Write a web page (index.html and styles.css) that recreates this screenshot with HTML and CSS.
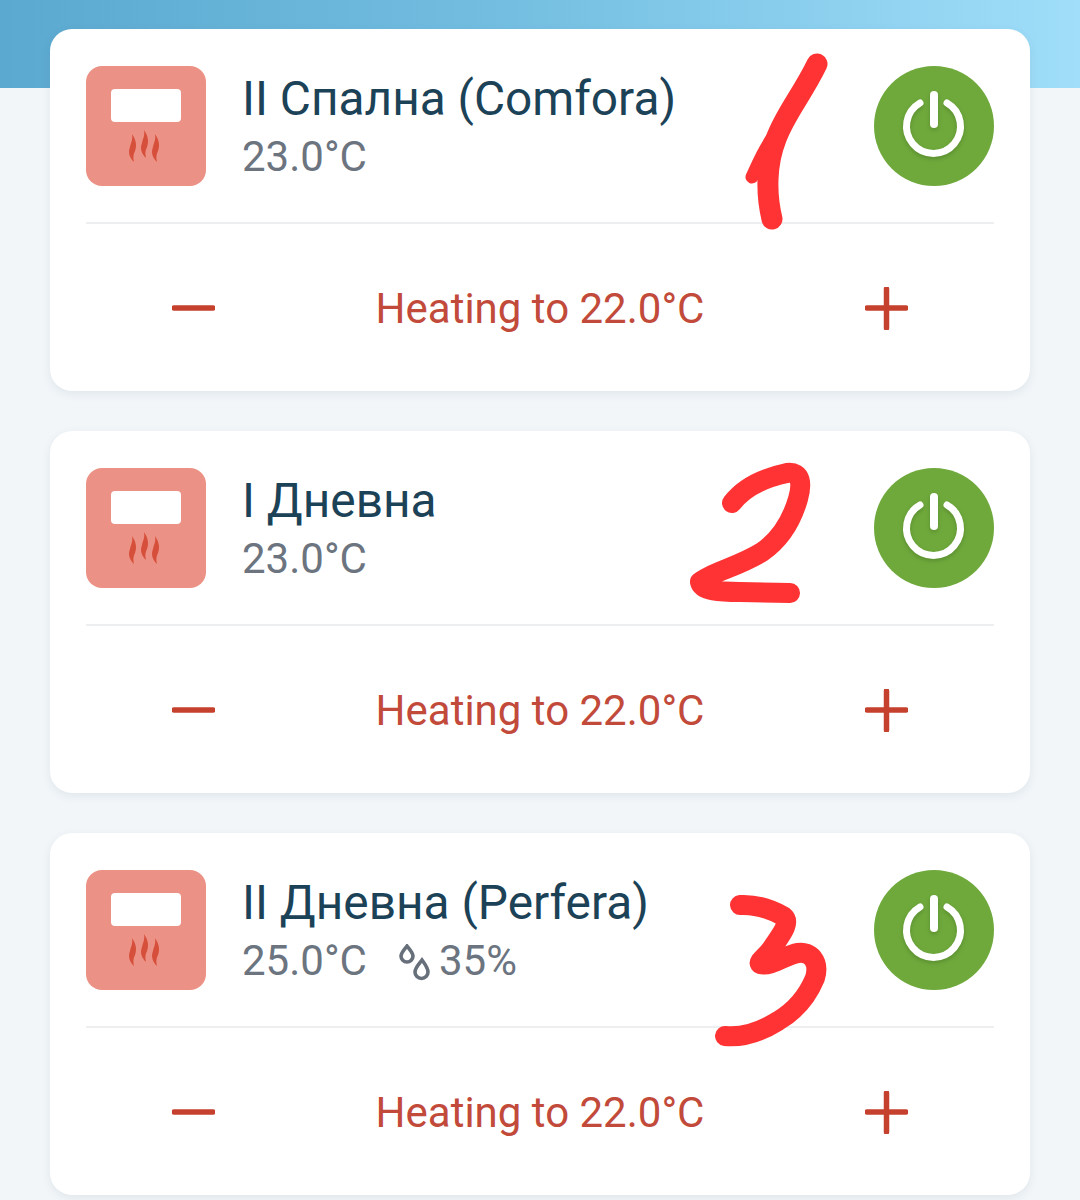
FILE: index.html
```html
<!DOCTYPE html>
<html lang="bg">
<head>
<meta charset="utf-8">
<title>Климатици</title>
<link rel="stylesheet" href="styles.css">
</head>
<body>
<main class="page">
  <svg width="0" height="0" class="defs" aria-hidden="true">
    <defs>
      <path id="flame" d="M58 64C62 70 63 75 61 81 59 85 59 88 60 92 55 87 54 82 56 77 57 72 59 70 58 64Z"/>
      <g id="unit">
        <rect x="25" y="23" width="70" height="33" rx="4" fill="#fff"/>
        <g fill="#d64f3a">
          <use href="#flame" transform="translate(-12 4)"/>
          <use href="#flame"/>
          <use href="#flame" transform="translate(11 4)"/>
        </g>
      </g>
      <g id="power" fill="none" stroke="#fff" stroke-linecap="round">
        <path d="M46 37a27 27 0 1 0 27 0" stroke-width="7"/>
        <path d="M60 29v29" stroke-width="8"/>
      </g>
    </defs>
  </svg>

  <article class="card">
    <div class="top">
      <svg class="unit" viewBox="0 0 120 120"><use href="#unit"/></svg>
      <div class="info">
        <h2 class="name">II Спална (Comfora)</h2>
        <p class="reading"><span>23.0°C</span></p>
      </div>
      <button class="power"><svg viewBox="0 0 120 120"><use href="#power"/></svg></button>
    </div>
    <div class="controls">
      <svg class="step" viewBox="0 0 43 43"><path d="M2 21h39"/></svg>
      <span class="status">Heating to 22.0°C</span>
      <svg class="step" viewBox="0 0 43 43"><path d="M2 21h39M21.500 2v39"/></svg>
    </div>
    <svg class="scribble" viewBox="0 0 980 362" aria-hidden="true">
      <path d="M767 35C755 62 742 80 723 108 712 124 708 135 702 148" stroke-width="13"/>
      <path d="M767 35C752 66 735 85 726 110 716 135 716 165 722 190" stroke-width="21"/>
    </svg>
  </article>

  <article class="card">
    <div class="top">
      <svg class="unit" viewBox="0 0 120 120"><use href="#unit"/></svg>
      <div class="info">
        <h2 class="name">I Дневна</h2>
        <p class="reading"><span>23.0°C</span></p>
      </div>
      <button class="power"><svg viewBox="0 0 120 120"><use href="#power"/></svg></button>
    </div>
    <div class="controls">
      <svg class="step" viewBox="0 0 43 43"><path d="M2 21h39"/></svg>
      <span class="status">Heating to 22.0°C</span>
      <svg class="step" viewBox="0 0 43 43"><path d="M2 21h39M21.500 2v39"/></svg>
    </div>
    <svg class="scribble" viewBox="0 0 980 362" aria-hidden="true">
      <path d="M682 72C695 55 718 46 737 42 752 40 752 54 748 68 741 92 728 110 712 121 688 136 662 141 650 151 652 160 670 161 690 161L740 162" stroke-width="20"/>
    </svg>
  </article>

  <article class="card">
    <div class="top">
      <svg class="unit" viewBox="0 0 120 120"><use href="#unit"/></svg>
      <div class="info">
        <h2 class="name">II Дневна (Perfera)</h2>
        <p class="reading">
          <span>25.0°C</span>
          <span class="humidity">
            <svg class="drops" viewBox="0 0 32 38"><path d="M8 2c3 4 6 7 6 10a6 6 0 0 1-12 0c0-3 3-6 6-10z"/><path d="M23 16c3 4 6 8 6 12a6.500 6.500 0 0 1-13 0c0-4 4-8 7-12z"/></svg>
            35%
          </span>
        </p>
      </div>
      <button class="power"><svg viewBox="0 0 120 120"><use href="#power"/></svg></button>
    </div>
    <div class="controls">
      <svg class="step" viewBox="0 0 43 43"><path d="M2 21h39"/></svg>
      <span class="status">Heating to 22.0°C</span>
      <svg class="step" viewBox="0 0 43 43"><path d="M2 21h39M21.500 2v39"/></svg>
    </div>
    <svg class="scribble" viewBox="0 0 980 362" aria-hidden="true">
      <path d="M690 72C706 71 720 76 733 83 742 90 729 104 722 115 716 124 708 128 710 131 722 134 735 122 748 120 760 118 770 128 765 145 758 162 745 178 728 188 712 198 694 205 675 203" stroke-width="20"/>
    </svg>
  </article>
</main>
</body>
</html>
```
FILE: styles.css
```css
* { box-sizing: border-box; }
html, body { margin: 0; padding: 0; }
body { font-family: Roboto, "Noto Sans", sans-serif; overflow: hidden; }

.page {
  height: 1200px;
  padding: 29px 50px 0;
  display: flex;
  flex-direction: column;
  gap: 40px;
  background-color: #f2f6f9;
  background-image: linear-gradient(90deg, #5ba9d0 0%, #72bde0 45%, #a0def9 100%);
  background-size: 100% 88px;
  background-repeat: no-repeat;
  overflow: hidden;
}

.defs { position: absolute; }

.card {
  position: relative;
  flex: none;
  height: 362px;
  padding: 37px 36px 0;
  background: #fff;
  border-radius: 22px;
  box-shadow: 0 3px 10px rgba(60, 80, 100, .09);
  display: flex;
  flex-direction: column;
}

.top {
  display: flex;
  align-items: flex-start;
  gap: 36px;
  height: 158px;
  border-bottom: 2px solid #eceeef;
}

.unit {
  flex: none;
  width: 120px;
  height: 120px;
  background: #ec9185;
  border-radius: 16px;
}

.info { flex: 1; min-width: 0; height: 120px; padding-top: 5px; }

.name {
  margin: 0;
  font-size: 47.8px;
  line-height: 56px;
  font-weight: 400;
  color: #1c4257;
}

.reading {
  margin: 0;
  display: flex;
  align-items: center;
  gap: 32px;
  font-size: 42px;
  line-height: 60px;
  color: #6b747f;
}

.humidity { display: flex; align-items: center; gap: 8px; }
.drops { width: 32px; height: 38px; margin-top: 4px; fill: none; stroke: #666f7a; stroke-width: 3.6; }

.power {
  flex: none;
  width: 120px;
  height: 120px;
  padding: 0;
  border: 0;
  border-radius: 50%;
  background: #6fa93c;
}
.power svg { display: block; width: 120px; height: 120px; filter: drop-shadow(0 2px 2px rgba(50, 90, 20, .35)); }

.controls {
  flex: 1;
  padding: 2px 86px 0;
  display: flex;
  align-items: center;
  justify-content: space-between;
}

.step { width: 43px; height: 43px; fill: none; stroke: #c5412e; stroke-width: 5.500; stroke-linecap: round; }
.status { font-size: 42px; color: #c24a3a; }

.scribble {
  position: absolute;
  inset: 0;
  width: 100%;
  height: 100%;
  fill: none;
  stroke: #ff3333;
  stroke-linecap: round;
  stroke-linejoin: round;
  pointer-events: none;
}
```
